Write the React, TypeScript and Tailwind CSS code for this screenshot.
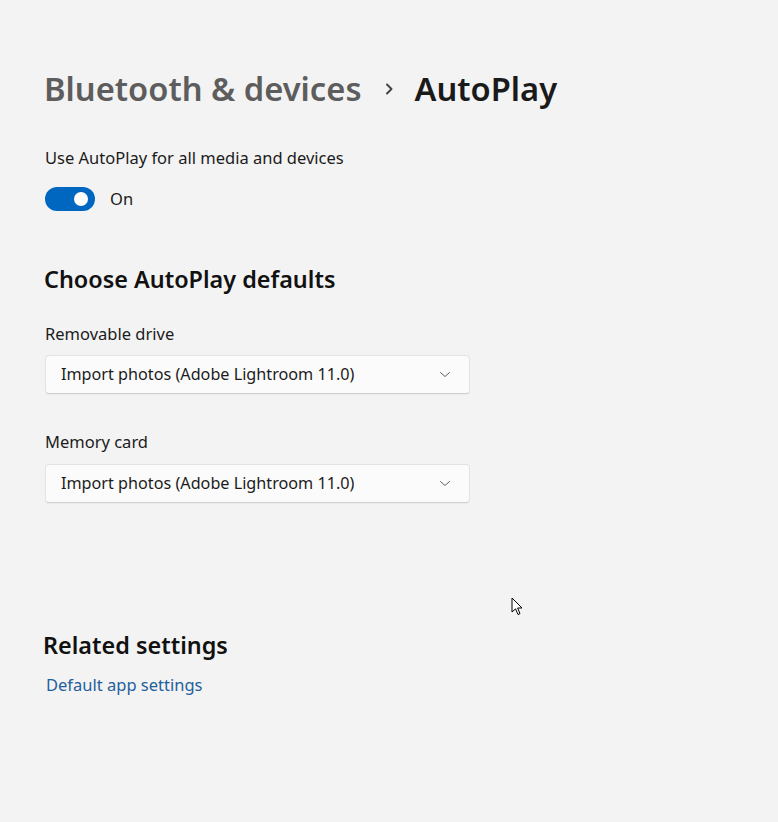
import React from "react";

function Chevron() {
  return (
    <svg width="12" height="12" viewBox="0 0 12 12" fill="none">
      <path d="M1.5 4.5 L6 8.5 L10.5 4.5" stroke="#5f5f5f" strokeWidth="1" strokeLinecap="round" strokeLinejoin="round" />
    </svg>
  );
}

function Dropdown({ value }: { value: string }) {
  return (
    <div className="w-[425px] h-[39px] bg-[#fbfbfb] border border-[#e3e3e3] border-b-[#d0d0d0] rounded-[4px] flex items-center justify-between pl-[15px] pr-[18px] shadow-[0_1px_0_rgba(0,0,0,0.03)]">
      <span className="text-[16.2px] text-[#1b1b1b]">{value}</span>
      <Chevron />
    </div>
  );
}

export default function App() {
  return (
    <div
      className="relative w-[778px] h-[822px] bg-[#f3f3f3] overflow-hidden"
      style={{ fontFamily: '"Noto Sans", "Open Sans", sans-serif' }}
    >
      <div className="pl-[44px] pt-[66px] flex flex-col">
        <div className="flex items-center h-[46px]">
          <span className="text-[32.7px] font-semibold text-[#5d5d5d] leading-none">Bluetooth &amp; devices</span>
          <svg className="ml-[22px] mr-[21px]" width="10" height="12" viewBox="0 0 10 12" fill="none">
            <path d="M3 1.5 L7.5 6 L3 10.5" stroke="#444" strokeWidth="2" strokeLinecap="round" strokeLinejoin="round" />
          </svg>
          <span className="text-[32.7px] font-semibold text-[#1a1a1a] leading-none">AutoPlay</span>
        </div>

        <div className="mt-[34px] pl-[1px] text-[16.5px] text-[#1b1b1b] leading-[24px]">Use AutoPlay for all media and devices</div>
        <div className="mt-[17px] pl-[1px] flex items-center">
          <div className="w-[50px] h-[24px] rounded-full bg-[#0067c0] flex items-center justify-end pr-[7px]">
            <div className="w-[14px] h-[14px] rounded-full bg-white" />
          </div>
          <span className="ml-[15px] text-[16.5px] text-[#1b1b1b]">On</span>
        </div>

        <div className="mt-[51px] text-[23.4px] font-semibold text-[#111] leading-[32px]">Choose AutoPlay defaults</div>

        <div className="mt-[27px] pl-[1px] text-[16.5px] text-[#1b1b1b] leading-[24px]">Removable drive</div>
        <div className="mt-[9px] pl-[1px]">
          <Dropdown value="Import photos (Adobe Lightroom 11.0)" />
        </div>

        <div className="mt-[36px] pl-[1px] text-[16.5px] text-[#1b1b1b] leading-[24px]">Memory card</div>
        <div className="mt-[10px] pl-[1px]">
          <Dropdown value="Import photos (Adobe Lightroom 11.0)" />
        </div>

        <div className="mt-[126px] -ml-[1px] text-[23.4px] font-semibold text-[#111] leading-[32px]">Related settings</div>
        <div className="mt-[12px] pl-[2px] text-[16.5px] text-[#1f5f9b] leading-[24px]">Default app settings</div>
      </div>

      <svg className="absolute left-[511px] top-[597px]" width="14" height="20" viewBox="0 0 14 20">
        <path d="M1 1 L1 15 L4.5 11.8 L7 17.5 L9 16.6 L6.6 11 L11 11 Z" fill="#fff" stroke="#000" strokeWidth="1" strokeLinejoin="round" />
      </svg>
    </div>
  );
}
